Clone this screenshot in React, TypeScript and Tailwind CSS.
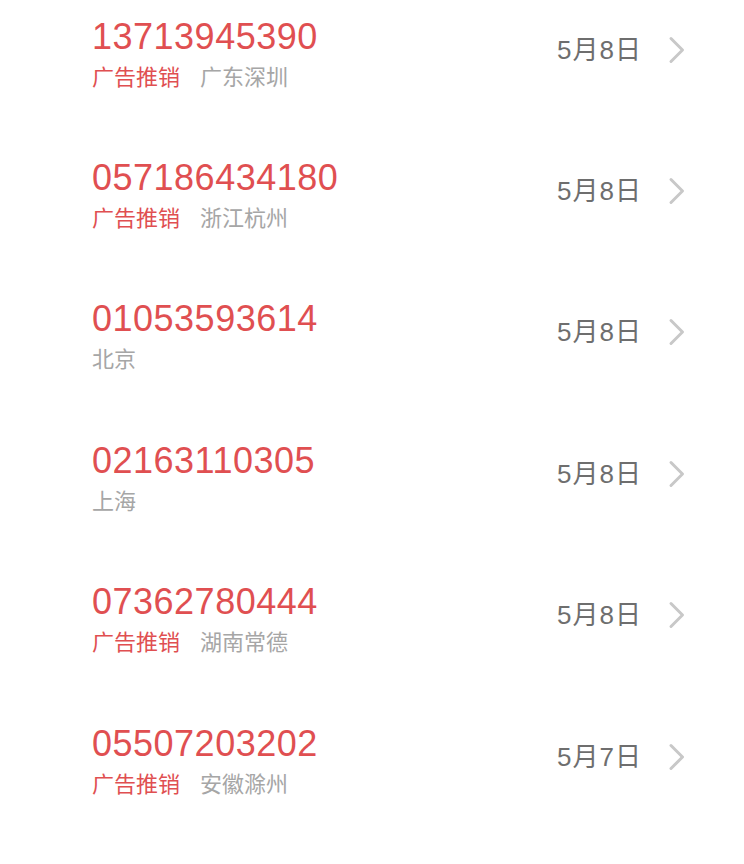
const calls = [
  { num: '13713945390', tag: '广告推销', place: '广东深圳', date: '5月8日' },
  { num: '057186434180', tag: '广告推销', place: '浙江杭州', date: '5月8日' },
  { num: '01053593614', tag: '', place: '北京', date: '5月8日' },
  { num: '02163110305', tag: '', place: '上海', date: '5月8日' },
  { num: '07362780444', tag: '广告推销', place: '湖南常德', date: '5月8日' },
  { num: '05507203202', tag: '广告推销', place: '安徽滁州', date: '5月7日' },
];

function Chevron() {
  return (
    <svg width="20" height="28" viewBox="0 0 20 28" fill="none">
      <path d="M4 2.5 L15.5 14 L4 25.5" stroke="#c8c8c8" strokeWidth="3" strokeLinecap="round" strokeLinejoin="round" />
    </svg>
  );
}

export default function App() {
  return (
    <div
      className="w-[744px] h-[864px] overflow-hidden bg-white"
      style={{ fontFamily: '"Liberation Sans", "Noto Sans CJK SC", sans-serif' }}
    >
      <div className="-mt-[18px]">
        {calls.map((c) => (
          <div key={c.num} className="h-[141.4px] flex items-center pl-[92px] pr-[57px]">
            <div className="flex-1 flex flex-col gap-[4px]">
              <div className="text-[36px] leading-[40px] text-[#e04f51] tracking-[0.5px]">{c.num}</div>
              <div className="flex gap-[20px] text-[22px] leading-[28px] font-['Noto_Sans_CJK_SC',sans-serif]">
                {c.tag && <span className="text-[#e04f51]">{c.tag}</span>}
                <span className="text-[#a6a6a6]">{c.place}</span>
              </div>
            </div>
            <div className="flex items-center gap-[25px] -mt-[6px]">
              <span className="text-[26px] leading-[30px] tracking-[1px] text-[#6e6e6e]">{c.date}</span>
              <Chevron />
            </div>
          </div>
        ))}
      </div>
    </div>
  );
}
